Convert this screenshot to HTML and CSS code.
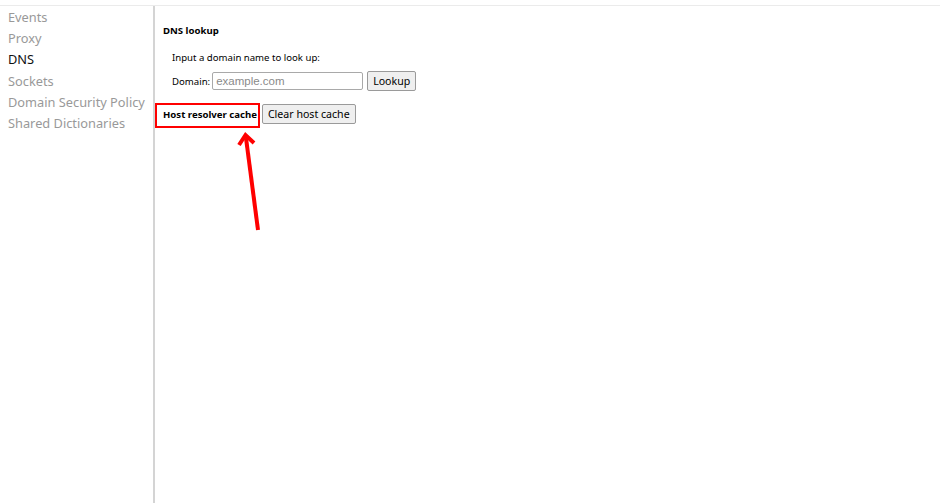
FILE: index.html
```html
<!DOCTYPE html>
<html>
<head>
<meta charset="utf-8">
<link rel="stylesheet" href="styles.css">
</head>
<body>
<div class="topline"></div>
<div class="layout">
  <nav class="sidebar">
    <div class="nav-item">Events</div>
    <div class="nav-item">Proxy</div>
    <div class="nav-item selected">DNS</div>
    <div class="nav-item">Sockets</div>
    <div class="nav-item">Domain Security Policy</div>
    <div class="nav-item">Shared Dictionaries</div>
  </nav>
  <main class="main">
    <h4 class="section-title">DNS lookup</h4>
    <div class="indent">
      <p class="hint">Input a domain name to look up:</p>
      <div class="form-row">
        <label class="label">Domain:</label>
        <input class="text-input" type="text" placeholder="example.com">
        <button class="btn">Lookup</button>
      </div>
    </div>
    <div class="cache-row">
      <h4 class="section-title inline">Host resolver cache</h4>
      <button class="btn">Clear host cache</button>
    </div>
    <div class="highlight-box"></div>
    <svg class="arrow" width="40" height="110" viewBox="0 0 40 110">
      <line x1="31" y1="103" x2="19" y2="11" stroke="#ff0000" stroke-width="4" stroke-linecap="butt"/>
      <polyline points="12,18 18.5,8 27,16" fill="none" stroke="#ff0000" stroke-width="4" stroke-linecap="butt" stroke-linejoin="miter"/>
    </svg>
  </main>
</div>
</body>
</html>
```
FILE: styles.css
```css
html, body {
  margin: 0;
  padding: 0;
  background: #ffffff;
}
body {
  font-family: "Noto Sans", "Open Sans", sans-serif;
  color: #000;
  width: 941px;
  height: 503px;
  overflow: hidden;
}
.topline {
  height: 5px;
  border-bottom: 1px solid #ebebeb;
  width: 940px;
}
.layout {
  display: flex;
  height: 497px;
}
.sidebar {
  width: 153px;
  border-right: 2px solid #d4d4d4;
  padding-top: 1px;
  flex-shrink: 0;
}
.nav-item {
  font-size: 12.8px;
  line-height: 21.2px;
  padding-left: 8px;
  color: #999999;
  white-space: nowrap;
}
.nav-item.selected {
  color: #111111;
}
.main {
  position: relative;
  flex: 1;
  padding-left: 8px;
  font-size: 9.6px;
}
.section-title {
  font-size: 9.6px;
  font-weight: bold;
  margin: 17px 0 0 0;
  line-height: 15px;
}
.section-title.inline {
  margin: 0;
  display: inline-block;
}
.indent {
  padding-left: 9px;
}
.hint {
  margin: 12px 0 0 0;
  line-height: 15px;
}
.form-row {
  display: flex;
  align-items: center;
  margin-top: 6px;
}
.label {
  font-size: 9.6px;
  margin-right: 2px;
}
.text-input {
  box-sizing: border-box;
  width: 151px;
  height: 18px;
  border: 1px solid #a9a9a9;
  border-radius: 2px;
  padding: 0 3px;
  font-family: "Liberation Sans", Arial, sans-serif;
  font-size: 11.5px;
  margin: 0;
}
.text-input::placeholder {
  color: #8a8a8a;
}
.btn {
  box-sizing: border-box;
  height: 20px;
  padding: 0 5px;
  border: 1px solid #9a9a9a;
  border-radius: 2px;
  background: #efefef;
  font-family: "Noto Sans", "Open Sans", sans-serif;
  font-size: 10.6px;
  color: #000;
  margin: 0 0 0 4px;
  line-height: 18px;
}
.cache-row {
  display: flex;
  align-items: center;
  margin-top: 13px;
}
.cache-row .btn {
  margin-left: 5px;
}
.highlight-box {
  position: absolute;
  left: 0;
  top: 97px;
  width: 101px;
  height: 21px;
  border: 2px solid #ff0000;
}
.arrow {
  position: absolute;
  left: 72px;
  top: 121px;
}
```
